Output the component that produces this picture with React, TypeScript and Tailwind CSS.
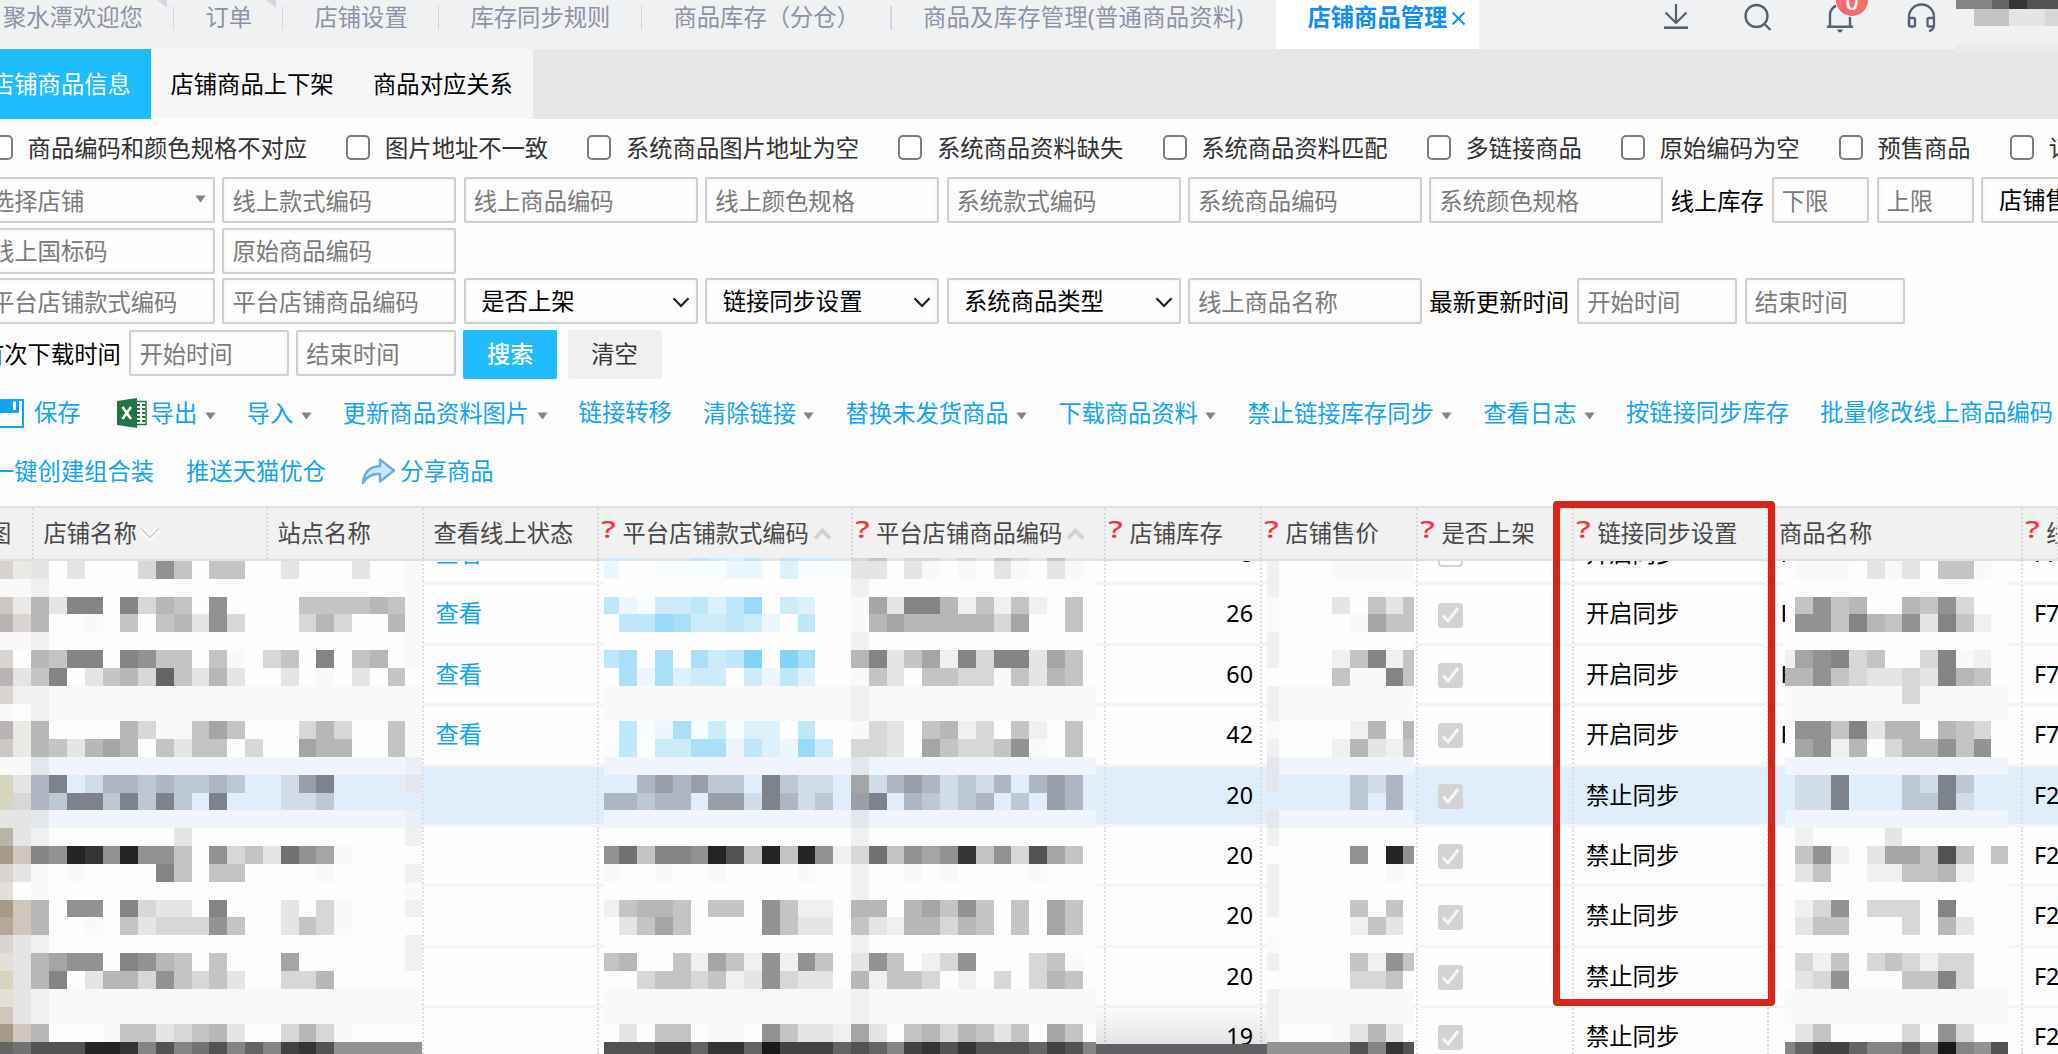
import React from "react";
import clsx from "clsx";

const tabs = [
  { name: "聚水潭欢迎您", width: "w-[174px] pl-[3px]", pinned: true },
  { name: "订单", width: "w-[109px] pl-[31.5px]", pinned: true },
  { name: "店铺设置", width: "w-[156px] pl-[31.5px]" },
  { name: "库存同步规则", width: "w-[203px] pl-[31.5px]" },
  { name: "商品库存（分仓）", width: "w-[249.5px] pl-[31.5px]" },
  { name: "商品及库存管理(普通商品资料)", width: "w-[384.5px] pl-[31.5px] tracking-[0.25px]", last: true },
];

const checks = [
  "商品编码和颜色规格不对应",
  "图片地址不一致",
  "系统商品图片地址为空",
  "系统商品资料缺失",
  "系统商品资料匹配",
  "多链接商品",
  "原始编码为空",
  "预售商品",
  "订单占有",
];

const actions = [
  { name: "导入", menu: true },
  { name: "更新商品资料图片", menu: true },
  { name: "链接转移" },
  { name: "清除链接", menu: true },
  { name: "替换未发货商品", menu: true },
  { name: "下载商品资料", menu: true },
  { name: "禁止链接库存同步", menu: true },
  { name: "查看日志", menu: true },
  { name: "按链接同步库存" },
  { name: "批量修改线上商品编码" },
];

const columns = [
  { name: "图" },
  { name: "店铺名称", sort: "down" },
  { name: "站点名称" },
  { name: "查看线上状态" },
  { name: "平台店铺款式编码", help: true, sort: "up" },
  { name: "平台店铺商品编码", help: true, sort: "up" },
  { name: "店铺库存", help: true },
  { name: "店铺售价", help: true },
  { name: "是否上架", help: true },
  { name: "链接同步设置", help: true },
  { name: "商品名称" },
  { name: "线上", help: true },
];

const rows = [
  { link: true, stock: "8", checked: false, sync: "开启同步", name: "F", code: "F7" },
  { link: true, stock: "26", checked: true, sync: "开启同步", name: "F", code: "F7" },
  { link: true, stock: "60", checked: true, sync: "开启同步", name: "F", code: "F7" },
  { link: true, stock: "42", checked: true, sync: "开启同步", name: "F", code: "F7" },
  { stock: "20", checked: true, sync: "禁止同步", code: "F2", selected: true },
  { stock: "20", checked: true, sync: "禁止同步", code: "F2" },
  { stock: "20", checked: true, sync: "禁止同步", code: "F2" },
  { stock: "20", checked: true, sync: "禁止同步", code: "F2" },
  { stock: "19", checked: true, sync: "禁止同步", code: "F2" },
];

const gridCols =
  "grid grid-cols-[33.5px_234px_156px_175.5px_253.5px_253.5px_156px_156px_156px_195px_253.5px_36px]";

/* mosaic colours, one letter each */
const tones: Record<string, string> = {
  "1": "#191919", "2": "#242424", "3": "#343434", "4": "#424242", "5": "#525252",
  "6": "#646464", "7": "#727272", "8": "#848484", "9": "#929292",
  a: "#a5a5a5", b: "#b7b7b7", c: "#c4c4c4", d: "#d7d7d7", e: "#e5e5e5", f: "#fdfdfd",
  v: "#f9f9f9", w: "#f0f0f0",
  // links
  g: "#f7fcfe", h: "#ebf7fd", i: "#dcf1fb", j: "#cdecfa", k: "#bee7fa",
  l: "#a9dff8", m: "#98daf7", n: "#82d3f5",
  // selected row
  o: "#e0eefc", p: "#d0dce8", q: "#bcc8d3", r: "#adb6c2", s: "#989fa9", t: "#7d838b",
  u: "#f0f4fd", x: "#e3e6ed", y: "#ebeef6",
  // thumbnails
  A: "#d8d2cd", B: "#cdc7c6", C: "#b9b3b4", D: "#dad5d3", E: "#ebe9e6",
  F: "#d6d5be", G: "#bab4a8", H: "#a69a86", I: "#b3a995", J: "#cfc7bb", K: "#e2dfd6",
  L: "#f0f1f3", M: "#ebebee",
};

const shopCells = [
  "AEefefffd9cfccffefffeffv",
  "vvwffffffffffffffffffffv",
  "BEbe88f8dbcf9ffffccccbcv",
  "CDbffvfcfcbe9dfffdbdffbv",
  "vvwffffffffffffffffffffv",
  "Dfbc88f89ccfcvfdcf8fcbfv",
  "Cec8fecbd6cebeffefvfefcf",
  "Dwwvvvvvvvvvvvvvvvvvvvvv",
  "vfwvvvvvvvvvvvvvvvvvvvvv",
  "CEbffffbdvvcacfffdbdffcv",
  "BEbcebabfceccfdffabbffcv",
  "vvxuuuuuuuuuuuuuuuuuuuuy",
  "Fertoprrqrqqrqoopstoooox",
  "Fdrqttqtqtqotoooppqooooo",
  "eexuuuuuuuuuuuuuuuuuuuuy",
  "Gewfffffffeffffffffffffw",
  "HJ89239299cf9dce79avffff",
  "Devfvffff8cfccffffvffffw",
  "Kfvffffffffffffffffffffv",
  "HJbf99f8deef8fffefdvfffw",
  "IJbffvfceddd9cffecdvffff",
  "Dewffffffffffffffffffffw",
  "Keba99f89bcfcfffaffffffw",
  "Feb8febbd9cdceffddbfffff",
  "Kewvvvvvvvvvvvvvvvvvvvvv",
  "Jewvvvvvvvvvvvvvvvvvvvvv",
  "HJbfffvccedcbeffdbdvffff",
  "675552238587586843599999",
];

const codeCells = [
  "jjeeekjikekjjedceddedecdecee",
  "hffgggghhfigggeefevfvfevfevf",
  "ffffffffffffffwfffffffffffff",
  "khgjjkikmfjiffvae88bwcwcwfcf",
  "fkkmljjkjhfkffvbabbbbbdaffcf",
  "ffffffffffffffwfffffffffffff",
  "klflfljknfnlffb8ecaw8d88eacf",
  "flhlijjfjhkiffvcefccddvcebcf",
  "vvvvvvvvvvvvvvwvvvvvvvvvvvvv",
  "vvvvvvvvvvvvvvwvvvvvvvvvvvvv",
  "fkghlgjgiifkffvdefcbwdfcwfcf",
  "gkfjjllukihmjfddefacddc9vfcf",
  "uuuuuuuuuuuuuuxuuuuuuuuuuuuu",
  "oorsrsqqotqppoaprsrpqprorsro",
  "rrqrrossptrpqostorqpqroqosro",
  "uuuuuuuuuuuuuuxuuuuuuuuuuuuu",
  "ffffffffffffffwfffffffffffff",
  "97c88925c2c29wd7c9a93c9d5acf",
  "vffvffvffffvffwffvfvffffvfff",
  "ffffffffffffffwfffffffffffff",
  "wcbbcfccf9cwwfbbfbac9cfcfacf",
  "fecacffff9ceefcewbbdbcfcfacf",
  "ffffffffffffffwfffffffffffff",
  "cbffcwacw9w9cfe9cfwd9fffdcvf",
  "ffdccdcwe9deefbwccdfwfdfdbcf",
  "vvvvvvvvvvvvvvwvvvvvvvvvvvvv",
  "vvvvvvvvvvvvvvwvvvvvvvvvvvvv",
  "fefccfvvf9ceewaefcbdbcecfacf",
  "5554463361444656843535556458",
];

const priceCells = [
  "wfffvvvvv",
  "wffffffff",
  "vfffefcec",
  "vffffvacc",
  "wffffffff",
  "wfffwc8wc",
  "ffffcvv8c",
  "wvvvvvvvv",
  "wvvvvvvvv",
  "vffffwbfb",
  "wfffwbewc",
  "xuuuuuuuu",
  "xooooqpro",
  "oooooqoro",
  "xuuuuuuuu",
  "wffffffff",
  "fffff9f29",
  "wffffffvf",
  "wffffffff",
  "wffffcfcf",
  "fffffwcef",
  "vffffffff",
  "wffffcw9c",
  "fffffddcf",
  "wvvvvvvvv",
  "wvvvvvvvv",
  "wfffvebef",
  "999995835",
];

const nameCells = [
  "fvvvfevefccvf",
  "fffffffffffff",
  "fc9cbffbc9dff",
  "f99c8bc9e8cwf",
  "fffffffffffff",
  "wa98dcffd8vwf",
  "bb9cdeede8bcf",
  "vvvvvvvdvvvvv",
  "vvvvvvvvvvvvv",
  "f99c8ebbfbcdf",
  "fa9wbfdbb9c9f",
  "uuuuuuuuuuuuu",
  "opptoooqptqoo",
  "opptoooqqtpoo",
  "uuuuuuuuuuuuu",
  "fwffffeffffff",
  "fc9wfeaac5cfc",
  "fecffwwccbwff",
  "fffffffffffff",
  "fwd9fdddf8fff",
  "feccfffdfbeff",
  "fffffffffffff",
  "fdwcfdcdwddff",
  "fed9fffcc8dff",
  "vvvvvvvvvvvvv",
  "vvvvvvvvvvvvv",
  "fecffffdf9dff",
  "8644688681895",
];

const userCells = ["886355", "Lcceed", "LLLLLL", "MMMMMM"];

const CELL = 17.82;

type MosaicProps = {
  cells: string[];
  className: string;
  width: number;
  height: number;
  dx?: number;
  dy?: number;
};

// dx / dy: how much of the first column / row is cut off
function Mosaic({ cells, className, width, height, dx = 0, dy = 0 }: MosaicProps) {
  return (
    <svg
      className={clsx("absolute", className)}
      width={width}
      height={height}
      viewBox={`${dx} ${dy} ${width} ${height}`}
      shapeRendering="crispEdges"
    >
      {cells.map((line, r) =>
        line.split("").map((c, i) => (
          <rect key={r + "-" + i} x={i * CELL} y={r * CELL} width={CELL + 0.4} height={CELL + 0.4} fill={tones[c]} />
        ))
      )}
    </svg>
  );
}

function Caret({ className = "" }: { className?: string }) {
  return (
    <svg width="11" height="8" viewBox="0 0 11 8" className={clsx("shrink-0", className)}>
      <path d="M0.300 0.600h10.400L5.500 7.400z" fill="#858585" />
    </svg>
  );
}

function Field({ text, className = "w-[234px]" }: { text: string; className?: string }) {
  return (
    <div
      className={clsx(
        "flex h-[46px] shrink-0 items-center overflow-hidden rounded-[2px] border-2 border-[#cfcfcf] bg-[#fefefe] pt-[3px] pl-[8px] text-[#7b7b7b] shadow-[inset_0_0_4px_#ededed]",
        className
      )}
    >
      {text}
    </div>
  );
}

function SelectField({ text }: { text: string }) {
  return (
    <div className="flex h-[46px] w-[234px] shrink-0 items-center justify-between overflow-hidden rounded-[2px] border-2 border-[#cfcfcf] bg-[#fefefe] pt-[2px] pr-[6px] pl-[15.5px] text-black shadow-[inset_0_0_4px_#ededed]">
      {text}
      <svg width="18" height="11" viewBox="0 0 18 11" fill="none" stroke="#222" strokeWidth="2.2" className="shrink-0">
        <path d="M1.5 1.2L9 9l7.5-7.8" />
      </svg>
    </div>
  );
}

function TopIcons() {
  return (
    <div className="ml-[183px] flex items-start pt-[3px] text-[#566075]">
      {/* download */}
      <svg width="28" height="30" viewBox="0 0 28 30" fill="none" stroke="currentColor" strokeWidth="2.2">
        <path d="M14 1v18M3.500 9.500L14 20l10.500-10.500" />
        <path d="M2 24.700h24" strokeWidth="2.6" />
      </svg>
      {/* search */}
      <svg width="30" height="30" viewBox="0 0 30 30" fill="none" stroke="currentColor" strokeWidth="2.4" className="ml-[53px]">
        <circle cx="13.500" cy="13" r="11" />
        <path d="M21 20.500l6.500 6.500" />
      </svg>
      {/* bell */}
      <div className="relative ml-[53px]">
        <svg width="28" height="32" viewBox="0 0 28 32" fill="none" stroke="currentColor" strokeWidth="2.4">
          <path d="M1 23.800h26M4 23.500V12a10 10 0 0 1 20 0v11.500" />
          <path d="M11 26.500h6q-1 3-3 3t-3-3z" fill="currentColor" stroke="none" />
        </svg>
        <span className="absolute -top-[20px] left-[9px] flex h-[34px] w-[34px] items-center justify-center rounded-full border border-white bg-[#f76d6d] pt-[3px] text-[23px] leading-none font-medium text-white">
          0
        </span>
      </div>
      {/* headset */}
      <svg width="29" height="32" viewBox="0 0 29 32" fill="none" stroke="currentColor" strokeWidth="2.3" className="ml-[53px]">
        <path d="M2 22V14a12.500 12.500 0 0 1 25 0v8" />
        <rect x="2" y="15" width="6" height="8.500" rx="1.500" />
        <path d="M27 15h-5q-1.500 0-1.500 1.500V22q0 1.500 1.500 1.500h5M27 22q0 5-5 6" />
      </svg>
    </div>
  );
}

function HeaderCell({ name, help, sort, index }: { name: string; help?: boolean; sort?: string; index: number }) {
  return (
    <div
      className={clsx(
        "flex items-center overflow-hidden whitespace-nowrap border-r-2 border-dotted border-[#d8d8d8]",
        index === 0 ? "-ml-[12px]" : help ? "pl-[1px]" : "pl-[10px]"
      )}
    >
      {help && (
        <span className="mb-[8px] flex w-[17px] shrink-0 scale-x-140 justify-center text-[23px] leading-none font-medium text-[#ff2f3b]">
          ?
        </span>
      )}
      <span className={clsx(help && "pl-[5.5px]")}>{name}</span>
      {sort === "down" && (
        <svg width="20" height="14" viewBox="0 0 20 14" fill="none" className="ml-[3px]">
          <path d="M1 1.500l9 9 9-9" stroke="#fff" strokeWidth="5" />
          <path d="M1 1.500l9 9 9-9" stroke="#d0d0d0" strokeWidth="1.800" />
        </svg>
      )}
      {sort === "up" && (
        <svg width="19" height="14" viewBox="0 0 19 14" fill="none" className="ml-[4px]">
          <path d="M2 11.500L9.500 3.500l7.500 8" stroke="#d3d3d3" strokeWidth="4" />
        </svg>
      )}
    </div>
  );
}

function RowCheck({ checked }: { checked: boolean }) {
  if (!checked) {
    return <div className="h-[25px] w-[25px] rounded-[4px] border-2 border-[#d2d2d2] bg-white" />;
  }
  return (
    <div className="flex h-[25px] w-[25px] items-center justify-center rounded-[3px] bg-[#d3d3d3]">
      <svg width="19" height="18" viewBox="0 0 19 18" fill="none" stroke="#f6f6f6" strokeWidth="3">
        <path d="M2 9.500l5 5.500L17 2" />
      </svg>
    </div>
  );
}

export default function App() {
  const cell = "flex items-center overflow-hidden whitespace-nowrap border-r-2 border-dotted border-[#dedede]";

  return (
    <div className="relative h-[1054px] w-[2058px] overflow-hidden bg-[#fdfdfd] font-['Noto_Sans','Noto_Sans_CJK_SC',sans-serif] text-[23.3px] leading-none whitespace-nowrap text-black">
      {/* window tabs */}
      <div className="flex h-[49px] bg-[#f0f1f3] text-[#8d92a6]">
        {tabs.map((t) => (
          <div key={t.name} className={clsx("relative shrink-0 pt-[6px]", t.width)}>
            {t.name}
            {t.pinned && <span className="absolute top-0 right-[7px] h-[8px] w-[10px] bg-[#d6d8e0] [clip-path:polygon(0_0,100%_0,100%_100%)]" />}
            {!t.last && <span className="absolute top-[6px] right-0 h-[24px] w-[1.5px] bg-[#d6d8e0]" />}
          </div>
        ))}
        <div className="flex w-[203px] shrink-0 items-start bg-white pt-[6px] pl-[31.5px] font-bold text-[#0d8dff]">
          店铺商品管理
          <svg width="15" height="15" viewBox="0 0 15 15" stroke="currentColor" strokeWidth="1.800" className="mt-[5px] ml-[4px]">
            <path d="M1.500 1.500l12 12M13.500 1.500l-12 12" />
          </svg>
        </div>
        <TopIcons />
      </div>

      {/* page tabs */}
      <div className="flex h-[70px] items-center bg-[#e7e7e7]">
        <div className="flex h-full w-[150.5px] items-center bg-[#1fbcff] pt-[2px] text-white">
          <span className="-ml-[9px]">店铺商品信息</span>
        </div>
        <div className="flex h-full w-[382.5px] items-center gap-[39.5px] bg-[#f6f6f6] pt-[2px] pl-[20px]">
          <span>店铺商品上下架</span>
          <span>商品对应关系</span>
        </div>
      </div>

      {/* filters */}
      <div className="-ml-[11px] flex h-[58px] items-center gap-[39.3px] text-[#333]">
        {checks.map((c) => (
          <div key={c} className="flex shrink-0 items-center gap-[14.6px]">
            <span className="h-[25px] w-[24px] rounded-[5px] border-2 border-[#7d7d7d] bg-white" />
            <span className="pt-[2px]">{c}</span>
          </div>
        ))}
      </div>

      <div className="-ml-[19px] flex flex-col">
        <div className="flex items-center gap-[7.4px]">
          <div className="relative">
            <Field text="选择店铺" />
            <Caret className="absolute top-[18px] right-[9px]" />
          </div>
          <Field text="线上款式编码" />
          <Field text="线上商品编码" />
          <Field text="线上颜色规格" />
          <Field text="系统款式编码" />
          <Field text="系统商品编码" />
          <Field text="系统颜色规格" />
          <span className="w-[93.5px] shrink-0 pt-[3px]">线上库存</span>
          <Field text="下限" className="w-[97.5px]" />
          <Field text="上限" className="w-[97.5px]" />
          <SelectField text="店铺售价" />
        </div>
        <div className="mt-[4.5px] flex items-center gap-[7.4px]">
          <Field text="线上国标码" />
          <Field text="原始商品编码" />
        </div>
        <div className="mt-[4.5px] flex items-center gap-[7.4px]">
          <Field text="平台店铺款式编码" />
          <Field text="平台店铺商品编码" />
          <SelectField text="是否上架" />
          <SelectField text="链接同步设置" />
          <SelectField text="系统商品类型" />
          <Field text="线上商品名称" />
          <span className="w-[140.5px] shrink-0 pt-[3px]">最新更新时间</span>
          <Field text="开始时间" className="w-[160px]" />
          <Field text="结束时间" className="w-[160px]" />
        </div>
        <div className="mt-[6px] flex items-start gap-[7.4px]">
          <span className="flex h-[46px] w-[141px] shrink-0 items-center pt-[3px]">首次下载时间</span>
          <Field text="开始时间" className="w-[159.5px]" />
          <Field text="结束时间" className="w-[159.5px]" />
          <button className="h-[49px] w-[94px] rounded-[2px] bg-[#1fbcff] font-medium text-white">搜索</button>
          <button className="ml-[3px] h-[49px] w-[94px] rounded-[2px] bg-[#f0f0f0] text-[#333]">清空</button>
        </div>
      </div>

      {/* actions */}
      <div className="mt-[11px] flex h-[46px] items-center text-[#10a5f2]">
        <svg width="34" height="32" viewBox="0 0 34 32" className="shrink-0">
          <path d="M-8 3H23V30H-8z" fill="#fff" stroke="#10a5f2" strokeWidth="2" />
          <path d="M-8 3H19V16H-8z" fill="#10a5f2" />
          <path d="M13 4.500h3v8.500h-3z" fill="#fff" />
        </svg>
        <span>保存</span>
        <svg width="30" height="32" viewBox="0 0 30 32" className="ml-[36px] shrink-0">
          <path d="M17 4.500h12v23H17z" fill="#fff" stroke="#227447" strokeWidth="1.500" />
          <path d="M20 8h3M25 8h3M20 12h3M25 12h3M20 16h3M25 16h3M20 20h3M25 20h3M20 24h3M25 24h3" stroke="#227447" strokeWidth="2" />
          <path d="M0 4L20 1v30L0 28z" fill="#227447" />
          <path d="M5.500 10l8.500 12M14 10L5.500 22" stroke="#fff" strokeWidth="2.600" />
        </svg>
        <div className="ml-[4px] flex items-center pt-[2px]">
          导出
          <Caret className="mt-[4px] ml-[7.4px]" />
        </div>
        {actions.map((a) => (
          <div key={a.name} className={clsx("ml-[31.1px] flex shrink-0 items-center", a.menu && "pt-[2px]")}>
            {a.name}
            {a.menu && <Caret className="mt-[4px] ml-[7.4px]" />}
          </div>
        ))}
      </div>
      <div className="-ml-[9px] mt-[12px] flex h-[46px] items-center text-[#10a5f2]">
        <span className="pt-[1px]">一键创建组合装</span>
        <span className="ml-[32px] pt-[1px]">推送天猫优仓</span>
        <svg width="36" height="30" viewBox="0 0 36 30" className="ml-[35px]">
          <path
            d="M2 27C3 16 9 10.500 19 10V3.500L33 14.500 19 25.500V18C11 17.500 6 20 2 27z"
            fill="#cfe5f8"
            stroke="#66aee6"
            strokeWidth="2.400"
            strokeLinejoin="round"
          />
        </svg>
        <span className="ml-[3.5px] pt-[1px]">分享商品</span>
      </div>

      {/* goods table */}
      <div className="mt-[12px] border-t-2 border-[#e2e2e2]">
        <div className={clsx(gridCols, "h-[53px] border-b-2 border-[#e0e0e0] bg-[#f1f1f1] text-[#484848]")}>
          {columns.map((c, i) => (
            <HeaderCell key={c.name} index={i} {...c} />
          ))}
        </div>
        <div className="h-[494px] overflow-hidden">
          <div className="-mt-[36px]">
            {rows.map((r, i) => (
              <div
                key={i}
                className={clsx(gridCols, "h-[60.4px] border-b-[3px] border-[#f4f4f4]", r.selected && "bg-[#e0eefc]")}
              >
                <div className={cell} />
                <div className={cell} />
                <div className={cell} />
                <div className={clsx(cell, "pl-[12px] text-[#10a5f2]")}>{r.link && "查看"}</div>
                <div className={cell} />
                <div className={cell} />
                <div className={clsx(cell, "justify-end pr-[7px]")}>{r.stock}</div>
                <div className={cell} />
                <div className={clsx(cell, "pl-[20px] pt-[2px]")}>
                  <RowCheck checked={r.checked} />
                </div>
                <div className={clsx(cell, "pl-[12px]")}>{r.sync}</div>
                <div className={clsx(cell, "pl-[11.5px]")}>{r.name}</div>
                <div className="flex items-center overflow-hidden pl-[11.5px]">{r.code}</div>
              </div>
            ))}
          </div>
        </div>
      </div>

      {/* shadow of the bar under the table */}
      <div className="absolute top-[1004px] left-[1096px] h-[40px] w-[171px] bg-gradient-to-b from-transparent to-black/10" />
      <div className="absolute top-[1044px] left-[1096px] h-[10px] w-[171px] bg-[#605f64]" />

      {/* masked data */}
      <Mosaic cells={shopCells} className="top-[561px] left-0" width={422} height={493} dx={4.42} />
      <Mosaic cells={codeCells} className="top-[558px] left-[604px]" width={492} height={496} dx={2.5} dy={14.8} />
      <Mosaic cells={priceCells} className="top-[561px] left-[1267px]" width={147} height={493} dx={6.2} />
      <Mosaic cells={nameCells} className="top-[561px] left-[1785px]" width={223} height={493} dx={7.4} />
      <Mosaic cells={userCells} className="top-0 left-[1956px]" width={102} height={54} dy={9.2} />

      {/* highlight frame */}
      <div className="absolute top-[501px] left-[1552.5px] h-[505px] w-[222.5px] rounded-[4px] border-[7.5px] border-[#db2415]" />
    </div>
  );
}
